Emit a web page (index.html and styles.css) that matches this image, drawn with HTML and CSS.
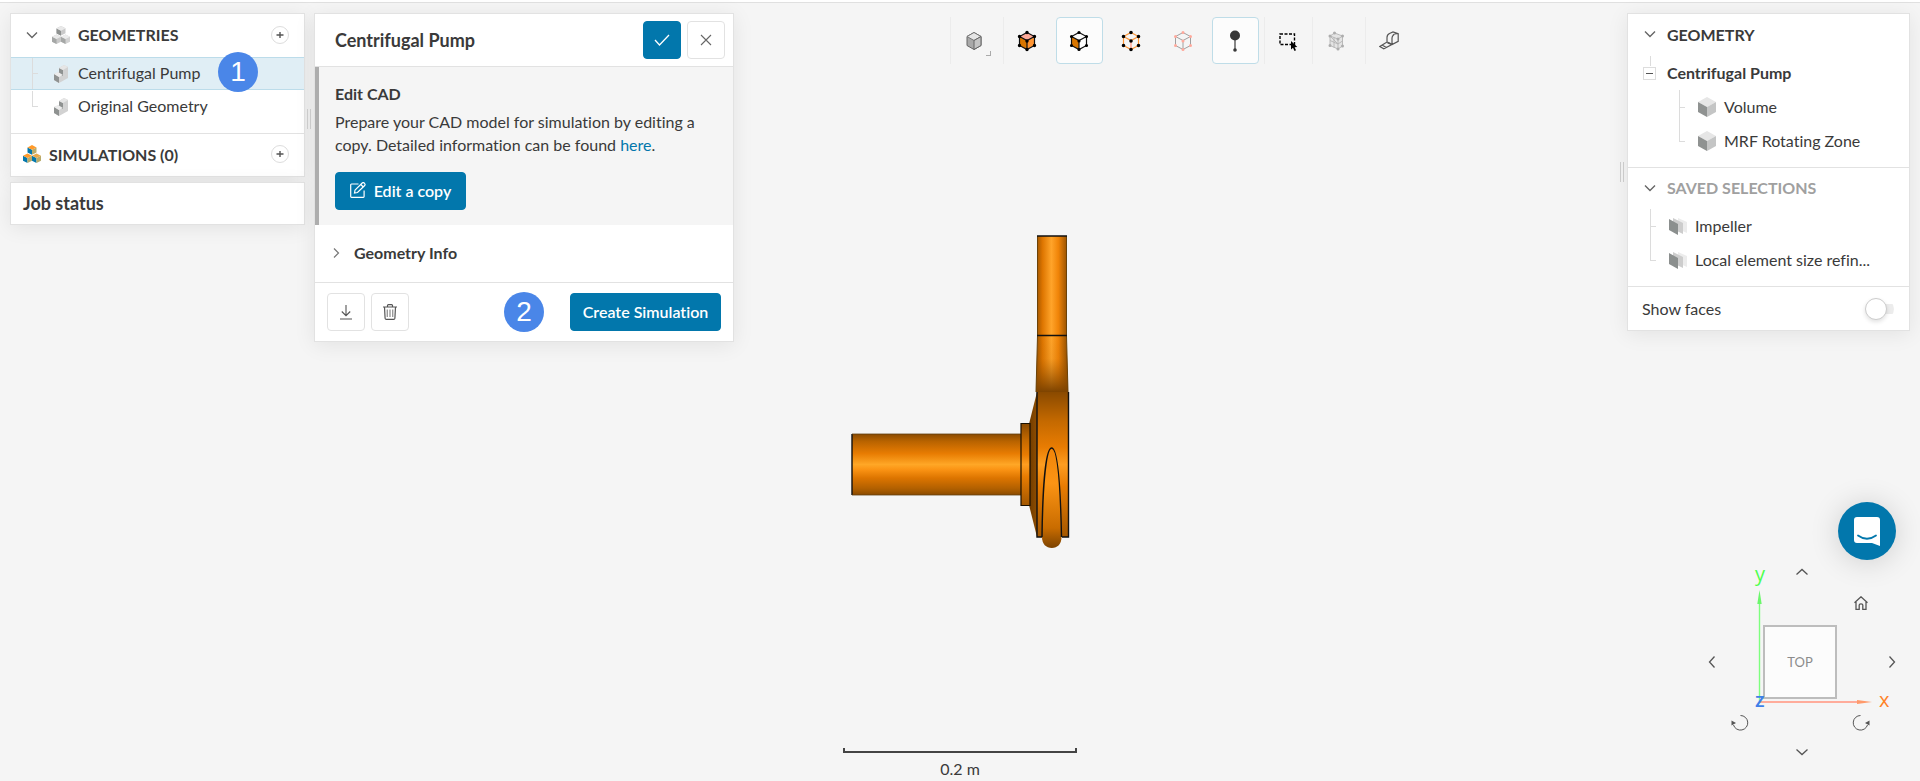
FILE: index.html
```
<!DOCTYPE html>
<html lang="en">
<head>
<meta charset="utf-8">
<title>Centrifugal Pump</title>
<link rel="stylesheet" href="styles.css">
</head>
<body>
<svg class="defs" aria-hidden="true">
  <defs>
    <symbol id="chev-down" viewBox="0 0 12 12"><path d="M1 3.5l5 5 5-5" fill="none" stroke="currentColor" stroke-width="1.4"/></symbol>
    <symbol id="plus" viewBox="0 0 8 8"><path d="M4 1v6M.5 4h7" stroke="#555" stroke-width="1.4"/></symbol>
    <symbol id="cube" viewBox="0 0 18 20"><path d="M9 0l9 5-9 5-9-5z" fill="#e6e6e6"/><path d="M0 5l9 5v10l-9-5z" fill="#8f9291"/><path d="M18 5l-9 5v10l9-5z" fill="#c4c5c5"/></symbol>
    <symbol id="part" viewBox="0 0 14 18"><path d="M5 3l5-3 4 2v11l-9 5-5-3V9l5-2z" fill="#d2d2d2"/><path d="M5 3l4 2v6l-4-1z" fill="#8f9291"/><path d="M0 9l5 3v6l-5-3z" fill="#8f9291"/><path d="M0 9l4-2 5 3-4 2z" fill="#ececec"/><path d="M5 3l5-3 4 2-5 3z" fill="#e6e6e6"/></symbol>
    <symbol id="sheets" viewBox="0 0 18 17"><path d="M9 0l9 4v11l-9-4z" fill="#ececec"/><path d="M4 0l10 5v11L4 11z" fill="#cdcdcd"/><path d="M0 1l9 5v11l-9-5z" fill="#8b8f8e"/></symbol>
  </defs>
</svg>

<div class="topline"></div>
<main class="app">
  <section class="canvas" aria-label="3D view">
    <svg class="pump" viewBox="835 220 250 341" role="img" aria-label="Centrifugal pump model">
      <defs>
        <linearGradient id="gv" x1="0" y1="0" x2="0" y2="1">
          <stop offset="0" stop-color="#8a4a00"/><stop offset=".12" stop-color="#b86300"/><stop offset=".32" stop-color="#e87c02"/><stop offset=".5" stop-color="#ffa726"/><stop offset=".58" stop-color="#fb9414"/><stop offset=".72" stop-color="#dd7500"/><stop offset=".9" stop-color="#b05f00"/><stop offset="1" stop-color="#8a4a00"/>
        </linearGradient>
        <linearGradient id="gh">
          <stop offset="0" stop-color="#985200"/><stop offset=".2" stop-color="#dd7500"/><stop offset=".48" stop-color="#ffa42a"/><stop offset=".7" stop-color="#f08408"/><stop offset="1" stop-color="#8d4c00"/>
        </linearGradient>
        <linearGradient id="neck" x1="0" y1="0" x2="0" y2="1">
          <stop offset="0" stop-color="#7d4300" stop-opacity="0"/><stop offset=".4" stop-color="#a05600" stop-opacity=".1"/><stop offset="1" stop-color="#7d4300"/>
        </linearGradient>
        <linearGradient id="disc" x1="0" y1="0" x2="0" y2="1">
          <stop offset="0" stop-color="#8a4a00"/><stop offset=".2" stop-color="#c46900"/><stop offset=".38" stop-color="#e87c02"/><stop offset=".5" stop-color="#fd9d20"/><stop offset=".65" stop-color="#e87c02"/><stop offset="1" stop-color="#a35700"/>
        </linearGradient>
        <linearGradient id="tongue" x1="0" y1="0" x2="0" y2="1">
          <stop offset="0" stop-color="#f08408"/><stop offset=".35" stop-color="#fb9414"/><stop offset=".8" stop-color="#c96c00"/><stop offset="1" stop-color="#7d4300"/>
        </linearGradient>
        <linearGradient id="cone"><stop offset="0" stop-color="#6e3b00"/><stop offset="1" stop-color="#8f4d00"/></linearGradient>
      </defs>
      <rect x="852" y="434" width="169" height="61" fill="url(#gv)"/>
      <path d="M852 434v61" stroke="#111" stroke-width="1.4"/>
      <path d="M852 434h169M852 495h169" stroke="#63400f" stroke-width=".8"/>
      <path d="M1029 424l8-32v145l-8-32z" fill="url(#cone)"/>
      <rect x="1021" y="424" width="9" height="81" fill="url(#disc)"/>
      <path d="M1021 423.500v82h9v-82z" fill="none" stroke="#1a1000" stroke-width="1.2"/>
      <path d="M1037.500 236h29v100l1.500 56h-32l1.500-56z" fill="url(#gh)"/>
      <path d="M1037.500 336h29l1.500 56h-32z" fill="url(#neck)"/>
      <path d="M1037.500 236v100l-1.500 56M1066.500 236v100l1.500 56" fill="none" stroke="#6b4208" stroke-width="1"/>
      <path d="M1037 236h30M1037 335.500h30" stroke="#111" stroke-width="1.6"/>
      <rect x="1037" y="392" width="32" height="145" fill="url(#disc)"/>
      <path d="M1037 392v145h5M1062 537h6.500V392" fill="none" stroke="#111" stroke-width="1.4"/>
      <path d="M1042 537c0-40 3-89 9.700-89S1061 497 1061.500 537c0 7-4 11-9.700 11s-9.800-4-9.800-11z" fill="url(#tongue)"/>
      <path d="M1042 537c.5-40 3-89 9.700-89s9 49 9.800 89" fill="none" stroke="#111" stroke-width="1.400"/>
    </svg>
  </section>

  <div class="overlay">
    <aside class="col-left">
      <nav class="card">
        <div class="head">
          <svg class="chev"><use href="#chev-down"/></svg>
          <svg class="ico-group" viewBox="0 0 18 18"><path d="M9 0l4.500 2.200v5L9 9.500 4.500 7.200v-5z" fill="#c9c9c9"/><path d="M4.500 2.500L9 4.700v5L4.500 7.400z" fill="#8f9291"/><path d="M9 0l4.500 2.400L9 4.700 4.500 2.400z" fill="#e9e9e9"/><path d="M4.500 8.500L9 10.700v5L4.500 18 0 15.700v-5z" fill="#c9c9c9"/><path d="M0 10.800L4.500 13v5L0 15.700z" fill="#a5a7a6"/><path d="M4.500 8.500L9 10.700 4.500 13 0 10.700z" fill="#e9e9e9"/><path d="M13.500 8.500l4.500 2.200v5L13.500 18 9 15.700v-5z" fill="#d2d2d2"/><path d="M9 10.800l4.500 2.200v5L9 15.700z" fill="#a5a7a6"/><path d="M13.500 8.500l4.500 2.200-4.500 2.300L9 10.700z" fill="#ececec"/></svg>
          <h2 class="h-caps">GEOMETRIES</h2>
          <button class="add" aria-label="Add geometry"><svg><use href="#plus"/></svg></button>
        </div>
        <ul class="tree tree-left">
          <li class="row selected"><span class="branch"></span><svg class="ico-part"><use href="#part"/></svg><span class="label">Centrifugal Pump</span><span class="badge badge-one">1</span></li>
          <li class="row"><span class="branch last"></span><svg class="ico-part"><use href="#part"/></svg><span class="label">Original Geometry</span></li>
        </ul>
        <div class="head head-sim">
          <svg class="ico-group" viewBox="0 0 18 18"><path d="M4.500 2.500L9 4.700v5L4.500 7.400z" fill="#0277ac"/><path d="M13.500 2.500L9 4.700v5l4.500-2.300z" fill="#b8ab6b"/><path d="M9 0l4.500 2.400L9 4.700 4.500 2.400z" fill="#ff9a2a"/><path d="M0 10.800L4.500 13v5L0 15.700z" fill="#0277ac"/><path d="M9 10.800L4.500 13v5L9 15.700z" fill="#b8ab6b"/><path d="M4.500 8.500L9 10.700 4.500 13 0 10.700z" fill="#ff9a2a"/><path d="M9 10.800l4.500 2.200v5L9 15.700z" fill="#0277ac"/><path d="M18 10.800L13.500 13v5l4.500-2.300z" fill="#b8ab6b"/><path d="M13.500 8.500l4.500 2.200-4.500 2.300L9 10.700z" fill="#e8a84a"/></svg>
          <h2 class="h-caps">SIMULATIONS (0)</h2>
          <button class="add" aria-label="Add simulation"><svg><use href="#plus"/></svg></button>
        </div>
      </nav>
      <section class="card job"><h2 class="title">Job status</h2></section>
    </aside>
    <div class="grip grip-left"></div>

    <section class="card detail">
      <header class="detail-head">
        <h1 class="title">Centrifugal Pump</h1>
        <button class="btn square primary" aria-label="Apply"><svg class="i16" viewBox="0 0 16 16"><path d="M1 8l4.500 5L15 3" fill="none" stroke="#fff" stroke-width="1.300"/></svg></button>
        <button class="btn square" aria-label="Close"><svg class="i16" viewBox="0 0 16 16"><path d="M3 3l10 10M13 3L3 13" stroke="#666" stroke-width="1.100"/></svg></button>
      </header>
      <div class="edit">
        <h3 class="sub">Edit CAD</h3>
        <p>Prepare your CAD model for simulation by editing a copy. Detailed information can be found <a href="#">here</a>.</p>
        <button class="btn primary wide"><svg class="i16" viewBox="0 0 16 16"><path d="M8.500 2H1.500Q.7 2 .7 3v11.500q0 .8.800.8h11.800q.8 0 .8-.8V8.500" fill="none" stroke="#fff" stroke-width="1.200"/><path d="M5 8.200L12.200 1q1-.9 2 0l.5.600q.8.900 0 1.900L7.500 10.500l-3 .600zM10.800 2.500l2.500 2.500" fill="none" stroke="#fff" stroke-width="1.200"/></svg>Edit a copy</button>
      </div>
      <button class="info"><svg class="i12" viewBox="0 0 12 12"><path d="M4 1.500L8.500 6 4 10.500" fill="none" stroke="#777" stroke-width="1.200"/></svg>Geometry Info</button>
      <footer class="detail-foot">
        <button class="btn square" aria-label="Download"><svg class="i16" viewBox="0 0 16 16"><path d="M8 1v10.500M3.800 7.500L8 11.700l4.200-4.200M2 15h12" fill="none" stroke="#555" stroke-width="1.100"/></svg></button>
        <button class="btn square" aria-label="Delete"><svg class="i16" viewBox="0 0 16 16"><path d="M1 3h14M5.500 2.800V1.500q0-.9.900-.9h3.200q.9 0 .9.900v1.300M2.500 3l.6 11.200q.1 1.200 1.200 1.200h7.400q1.100 0 1.200-1.200L13.500 3" fill="none" stroke="#555" stroke-width="1.200"/><path d="M5.300 5.500v7.500M8 5.500v7.500M10.700 5.500v7.500" stroke="#999" stroke-width="1.400"/></svg></button>
        <span class="badge badge-two">2</span>
        <button class="btn primary create">Create Simulation</button>
      </footer>
    </section>

    <div class="center" role="toolbar" aria-label="View tools">
      <div class="tools"><button class="tool" aria-label="Render mode"><svg viewBox="0 0 20 20"><path d="M10 1.500l7 4v9L10 18.500l-7-4v-9z" fill="#a9a9a9" stroke="#666"/><path d="M10 1.500l7 4-7 4-7-4z" fill="#e6e6e6" stroke="#777"/><path d="M10 9.500v9l7-4v-9z" fill="#c4c4c4" stroke="#666"/></svg><i class="corner"></i></button></div>
      <div class="tools">
        <button class="tool" aria-label="Select volumes"><svg viewBox="0 0 20 20"><path d="M10 1.500l7.500 4L10 9.500 2.500 5.500z" fill="#ffac9b"/><path d="M2.500 5.500L10 9.500v9l-7.500-4z" fill="#d97600"/><path d="M17.500 5.500L10 9.500v9l7.500-4z" fill="#ff9533"/><path d="M10 1.500l7.500 4v9l-7.500 4-7.500-4v-9zM2.500 5.500l7.500 4 7.500-4M10 9.500v9" fill="none" stroke="#111" stroke-width="1.200"/><path d="M10 1.500h0M17.500 5.500h0M17.500 14.500h0M10 18.500h0M2.500 14.500h0M2.500 5.500h0M10 10h0" stroke="#000" stroke-width="3.400" stroke-linecap="round"/></svg></button>
        <button class="tool active" aria-label="Select faces" aria-pressed="true"><svg viewBox="0 0 20 20"><path d="M10 1.500l7.500 4v9l-7.500 4z" fill="#fff"/><path d="M2.500 5.500L10 9.500v9l-7.500-4z" fill="#d97600"/><path d="M10 1.500l7.500 4v9l-7.500 4-7.500-4v-9zM2.500 5.500l7.500 4 7.500-4M10 9.500v9" fill="none" stroke="#111" stroke-width="1.200"/><path d="M10 1.500h0M17.500 5.500h0M17.500 14.500h0M10 18.500h0M2.500 14.500h0M2.500 5.500h0M10 10h0" stroke="#000" stroke-width="3.200" stroke-linecap="round"/></svg></button>
        <button class="tool" aria-label="Select vertices"><svg viewBox="0 0 20 20"><path d="M10 1.500l7.500 4v9l-7.500 4-7.500-4v-9zM2.500 5.500l7.500 4 7.500-4" fill="none" stroke="#ff9533" stroke-width="1.200"/><path d="M10 9.500v9" stroke="#ffac9b" stroke-width="1.600"/><path d="M10 1.500h0M17.500 5.500h0M17.500 14.500h0M10 18.500h0M2.500 14.500h0M2.500 5.500h0M10 10h0" stroke="#000" stroke-width="3.600" stroke-linecap="round"/></svg></button>
        <button class="tool" aria-label="Select edges"><svg viewBox="0 0 20 20"><path d="M10 1.500l7.500 4v9l-7.500 4-7.500-4v-9zM2.500 5.500l7.500 4 7.500-4M10 9.500v9" fill="none" stroke="#a0a0a0"/><path d="M10 1.500h0M17.500 5.500h0M17.500 14.500h0M10 18.500h0M2.500 14.500h0M2.500 5.500h0M10 10h0" stroke="#ffa99c" stroke-width="3" stroke-linecap="round"/></svg></button>
        <button class="tool active" aria-label="Probe" aria-pressed="true"><svg viewBox="0 0 20 22"><circle cx="10" cy="5.500" r="5" fill="#383838"/><path d="M10 6v14" stroke="#383838" stroke-width="1.200"/><circle cx="10" cy="20" r="1.800" fill="#383838"/></svg></button>
      </div>
      <div class="tools tight"><button class="tool" aria-label="Box select"><svg viewBox="0 0 20 20"><rect x="2" y="3" width="14.500" height="10.500" fill="none" stroke="#000" stroke-width="1.400" stroke-dasharray="3 1.500"/><path d="M13 10v8.500l2-1.800 1.500 3.200 1.500-.7-1.400-3 2.700-.2z" fill="#000"/></svg></button></div>
      <div class="tools"><button class="tool" aria-label="Mesh clip"><svg viewBox="0 0 20 20"><path d="M4 5l4.500-3L16.500 5v10L12 18l-8-3.500z" fill="#e4e4e4"/><path d="M4 5l4.500-3L16.500 5v10L12 18l-8-3.500zM4 5l8 3 4.500-3M12 8v10M4 9.500l8 3.500 4.500-3M4 5l8 8M8 6.500v10" fill="none" stroke="#b4b4b4" stroke-width=".9"/><path d="M4 5h0M8.500 2h0M16.500 5h0M16.500 15h0M12 18h0M4 14.500h0M12 8h0" stroke="#adadad" stroke-width="3" stroke-linecap="round"/></svg></button></div>
      <div class="tools"><button class="tool" aria-label="Measure"><svg viewBox="0 0 20 20"><path d="M8 11V6.500Q8 3.500 10.500 2.500L14 1l5.200 1.800v7.500L13 13.500 8.500 12M10.500 2.500q-2.500 1.200-2.500 4M14 4.500Q14.500 2.500 19.200 2.800M13 13.500V7q0-2 2-3.500M13 13.500q-3-2.500-5-2.500L.8 15.500l4 2.300L13 13.500M3.500 14.300l3.800 2.200" fill="none" stroke="#555" stroke-width="1.200"/></svg></button></div>
    </div>

    <div class="grip grip-right"></div>
    <aside class="card col-right">
      <div class="head">
        <svg class="chev"><use href="#chev-down"/></svg><h2 class="h-caps">GEOMETRY</h2>
      </div>
      <ul class="tree">
        <li class="row root"><button class="minus" aria-label="Collapse"></button><strong class="label">Centrifugal Pump</strong></li>
        <li class="row deep"><span class="branch"></span><svg class="ico-cube"><use href="#cube"/></svg><span class="label">Volume</span></li>
        <li class="row deep"><span class="branch last"></span><svg class="ico-cube"><use href="#cube"/></svg><span class="label">MRF Rotating Zone</span></li>
      </ul>
      <div class="head head-saved">
        <svg class="chev"><use href="#chev-down"/></svg><h2 class="h-caps muted">SAVED SELECTIONS</h2>
      </div>
      <ul class="tree">
        <li class="row shallow"><span class="branch"></span><svg class="ico-sheets"><use href="#sheets"/></svg><span class="label">Impeller</span></li>
        <li class="row shallow"><span class="branch last"></span><svg class="ico-sheets"><use href="#sheets"/></svg><span class="label">Local element size refin...</span></li>
      </ul>
      <label class="faces">Show faces<input class="toggle" type="checkbox" role="switch"></label>
    </aside>
  </div>

  <div class="scale"><div class="scale-bar"></div><span>0.2 m</span></div>

  <button class="chat" aria-label="Open chat"><svg viewBox="0 0 26 29"><path d="M3 0h20q3 0 3 3v26l-8-3H3q-3 0-3-3V3q0-3 3-3z" fill="#fff"/><path d="M4 18.500q9 6.500 18 0" fill="none" stroke="#0277ac" stroke-width="1.800" stroke-linecap="round"/></svg></button>

  <div class="gizmo">
    <svg class="axes" viewBox="1700 560 206 200">
      <path d="M1759.500 702V604" stroke="#7dff7d" stroke-width="1.400"/><path d="M1759.500 590l2.200 14h-4.400z" fill="#6bf76b"/>
      <path d="M1759 702h99" stroke="#ffac9b" stroke-width="2"/><path d="M1872 702l-15-2v4z" fill="#ff9a6b"/>
      <text class="axis" x="1755" y="581" fill="#4dff4d">y</text>
      <text class="axis" x="1879" y="707" fill="#ff8227">x</text>
      <text class="axis bold" x="1755" y="707" fill="#3f7fe8">z</text>
    </svg>
    <button class="nav up" aria-label="Rotate up"><svg viewBox="0 0 12 12"><path d="M.5 8.500L6 3.500l5.500 5"/></svg></button>
    <button class="nav home" aria-label="Home view"><svg viewBox="0 0 14 14"><path d="M.5 6.800L7 .8l6.500 6M2 6v7.300h3.200V9q0-1.200 1.800-1.200T8.800 9v4.300H12V6"/></svg></button>
    <button class="nav left" aria-label="Rotate left"><svg viewBox="0 0 12 12"><path d="M8.500.5L3.500 6l5 5.500"/></svg></button>
    <button class="face">TOP</button>
    <button class="nav right" aria-label="Rotate right"><svg viewBox="0 0 12 12"><path d="M3.500.5L8.500 6l-5 5.500"/></svg></button>
    <button class="nav ccw" aria-label="Roll left"><svg viewBox="0 0 18 18"><path d="M9.500 1.500a7.300 7.300 0 1 1-7 9.500"/><path class="solid" d="M.5 6.500l4.500 2.500-4.500 2.500z"/></svg></button>
    <button class="nav cw" aria-label="Roll right"><svg viewBox="0 0 18 18"><path d="M8.500 1.500a7.300 7.300 0 1 0 7 9.500"/><path class="solid" d="M17.500 6.500L13 9l4.500 2.500z"/></svg></button>
    <button class="nav down" aria-label="Rotate down"><svg viewBox="0 0 12 12"><path d="M.5 3.500l5.500 5 5.500-5"/></svg></button>
  </div>
</main>
</body>
</html>
```
FILE: styles.css
```
* { box-sizing: border-box; }
body {
  margin: 0;
  height: 100vh;
  display: flex;
  flex-direction: column;
  overflow: hidden;
  background: #f5f5f5;
  color: #3a3a3a;
  font: 16px/23px Lato, sans-serif;
  font-variant-ligatures: none;
}
h1, h2, h3, p, ul { margin: 0; padding: 0; }
ul { list-style: none; }
a { color: #0277ac; text-decoration: none; }
button { font: inherit; color: inherit; background: none; border: 0; padding: 0; margin: 0; }
svg { display: block; flex: none; }
.defs { position: absolute; width: 0; height: 0; }
.topline { height: 3px; flex: none; background: #fff; border-bottom: 1px solid #e0e0e0; }
.app { position: relative; flex: 1; }
.canvas { position: absolute; inset: 0; display: grid; place-items: center; padding-bottom: 4px; }
.pump { width: 250px; height: 341px; }

.overlay { position: relative; display: flex; align-items: flex-start; padding: 10px; }
.card { background: #fff; border: 1px solid #e2e2e2; box-shadow: 0 3px 20px rgba(0, 0, 0, .08); }
.col-left { width: 295px; display: flex; flex-direction: column; gap: 5px; }
.detail { width: 420px; }
.col-right { width: 283px; }
.center { flex: 1; display: flex; justify-content: center; padding: 4px 0 0 8px; }

.head { display: flex; align-items: center; height: 43px; padding: 0 15px 2px; }
.h-caps { font-size: 16px; font-weight: 700; }
.title { font-size: 18px; font-weight: 700; }
.muted { color: #a0a0a0; }
.chev { width: 12px; height: 12px; color: #666; }
.ico-group { width: 18px; height: 18px; }
.add {
  display: grid;
  place-items: center;
  width: 18px;
  height: 18px;
  margin-left: auto;
  border: 1px solid #ddd;
  border-radius: 50%;
}
.add svg { width: 8px; height: 8px; }
.col-left .chev { margin-right: 14px; }
.col-left .ico-group { margin-right: 8px; }
.col-left .head-sim { border-top: 1px solid #e2e2e2; padding-left: 12px; }
.tree-left { padding-bottom: 10px; }

.row { display: flex; align-items: center; height: 34px; }
.label { padding-bottom: 2px; }
.tree-left .row { height: 33px; padding-left: 21px; border: solid transparent; border-width: 1px 0; }
.tree-left .selected { position: relative; background: #e0eef5; border-color: #bcdcea; }
.branch {
  width: 6px;
  align-self: stretch;
  background:
    linear-gradient(#dcdcdc, #dcdcdc) left top / 1px 100% no-repeat,
    linear-gradient(#dcdcdc, #dcdcdc) left center / 100% 1px no-repeat;
}
.branch.last { background-size: 1px 50%, 100% 1px; }
.ico-part { width: 14px; height: 18px; margin: 0 10px 0 16px; }
.badge {
  display: grid;
  place-items: center;
  width: 40px;
  height: 40px;
  border-radius: 50%;
  background: #4a86e8;
  color: #fff;
  font: 28px/40px "Liberation Sans", sans-serif;
}
.badge-one { position: absolute; left: 207px; top: -6px; }
.job { padding: 9px 12px; }

.grip { width: 4px; height: 20px; border: solid #d0d0d0; border-width: 0 1px; }
.grip-left { margin: 96px 3px 0 2px; }
.grip-right { margin: 149px 3px 0 0; }

.detail-head { display: flex; align-items: center; gap: 6px; height: 53px; padding: 0 8px 0 20px; border-bottom: 1px solid #e2e2e2; }
.detail-head .title { flex: 1; }
.btn { display: flex; align-items: center; justify-content: center; height: 38px; border: 1px solid #e2e2e2; border-radius: 4px; background: #fff; }
.square { width: 38px; }
.primary { background: #0277ac; border-color: #0277ac; color: #fff; font-weight: 600; }
.i16 { width: 16px; height: 16px; }
.i12 { width: 12px; height: 12px; }
.edit { padding: 15px 20px 15px 16px; border-left: 4px solid #adadad; background: #f5f5f5; }
.sub { font-size: 16px; font-weight: 700; margin-bottom: 5px; }
.edit p { margin-bottom: 16px; }
.wide { gap: 8px; width: 131px; padding-bottom: 2px; }
.info { display: flex; align-items: center; gap: 12px; width: 100%; height: 57px; padding: 0 15px 2px; font-weight: 700; }
.detail-foot { display: flex; align-items: center; gap: 6px; height: 59px; padding: 0 12px; border-top: 1px solid #e2e2e2; }
.badge-two { margin-left: auto; }
.create { width: 151px; margin-left: 20px; padding-bottom: 2px; }

.tools { display: flex; gap: 5px; padding-right: 5px; border-left: 1px solid #ececec; }
.tools.tight, .tools:last-child { padding-right: 0; }
.tool { position: relative; display: grid; place-items: center; width: 47px; height: 47px; border: 1px solid transparent; border-radius: 4px; }
.tool svg { width: 20px; height: 22px; }
.tool.active { background: #fcfcfc; border-color: #bfdde8; }
.corner { position: absolute; right: 6px; bottom: 7px; width: 5px; height: 5px; border: solid #aaa; border-width: 0 1px 1px 0; }

.col-right .chev { margin-right: 11px; }
.col-right .head { height: 42px; padding-left: 16px; }
.col-right .tree { padding-bottom: 9px; }
.root { padding-left: 15px; gap: 11px; background: linear-gradient(#dcdcdc, #dcdcdc) 22px 0 / 1px 10px no-repeat; }
.minus {
  width: 13px;
  height: 13px;
  border: 1px solid #ddd;
  background: linear-gradient(#555, #555) center / 7px 1px no-repeat;
}
.deep { padding-left: 51px; }
.shallow { padding-left: 22px; }
.ico-cube { width: 18px; height: 20px; margin: 0 8px 0 13px; }
.ico-sheets { width: 18px; height: 17px; margin: 0 8px 0 13px; }
.head-saved { border-top: 1px solid #e2e2e2; }
.faces { display: flex; align-items: center; justify-content: space-between; height: 44px; padding: 0 15px 0 14px; border-top: 1px solid #e2e2e2; }
.toggle { appearance: none; display: flex; align-items: center; width: 29px; height: 20px; margin: 0; background: linear-gradient(#ececec, #ececec) right center / 20px 10px no-repeat; border-radius: 10px; }
.toggle::before { content: ""; width: 20px; height: 20px; border: 1px solid #ccc; border-radius: 50%; background: #fff; box-shadow: 0 2px 4px rgba(0, 0, 0, .12); }

.scale { position: absolute; left: 50%; bottom: 0; width: 234px; padding-bottom: 1px; transform: translateX(-50%); text-align: center; }
.scale-bar { height: 5px; margin-bottom: 4px; border: solid #444; border-width: 0 2px 2px; }
.chat {
  position: absolute;
  right: 24px;
  bottom: 221px;
  display: grid;
  place-items: center;
  width: 58px;
  height: 58px;
  border-radius: 50%;
  background: #0277ac;
  box-shadow: 0 2px 30px rgba(0, 0, 0, .16);
}
.chat svg { width: 26px; height: 29px; }
.gizmo {
  position: absolute;
  right: 14px;
  bottom: 21px;
  display: grid;
  grid-template-columns: 24px 32px 88px 34px 28px;
  grid-template-rows: 24px 38px 80px 42px 16px;
  place-items: center;
}
.axes { position: absolute; inset: 0; width: 206px; height: 200px; pointer-events: none; z-index: 1; }
.axis { font: 20px "Open Sans", sans-serif; }
.axis.bold { font-weight: 600; }
.nav svg { width: 12px; height: 12px; fill: none; stroke: #555; stroke-width: 1.3; }
.nav .solid { fill: #555; stroke: none; }
.up { grid-area: 1 / 3; padding-left: 4px; }
.home { grid-area: 2 / 4; }
.left { grid-area: 3 / 1; }
.face { grid-area: 3 / 3; width: 74px; height: 74px; border: 2px solid #bdbdbd; background: #fcfcfc; color: #8c8c8c; font-size: 13px; }
.right { grid-area: 3 / 5; }
.ccw { grid-area: 4 / 2; }
.cw { grid-area: 4 / 4; }
.down { grid-area: 5 / 3; padding-left: 4px; }
.home svg { width: 14px; height: 14px; }
.ccw svg, .cw svg { width: 18px; height: 18px; stroke-width: 1; }
```
